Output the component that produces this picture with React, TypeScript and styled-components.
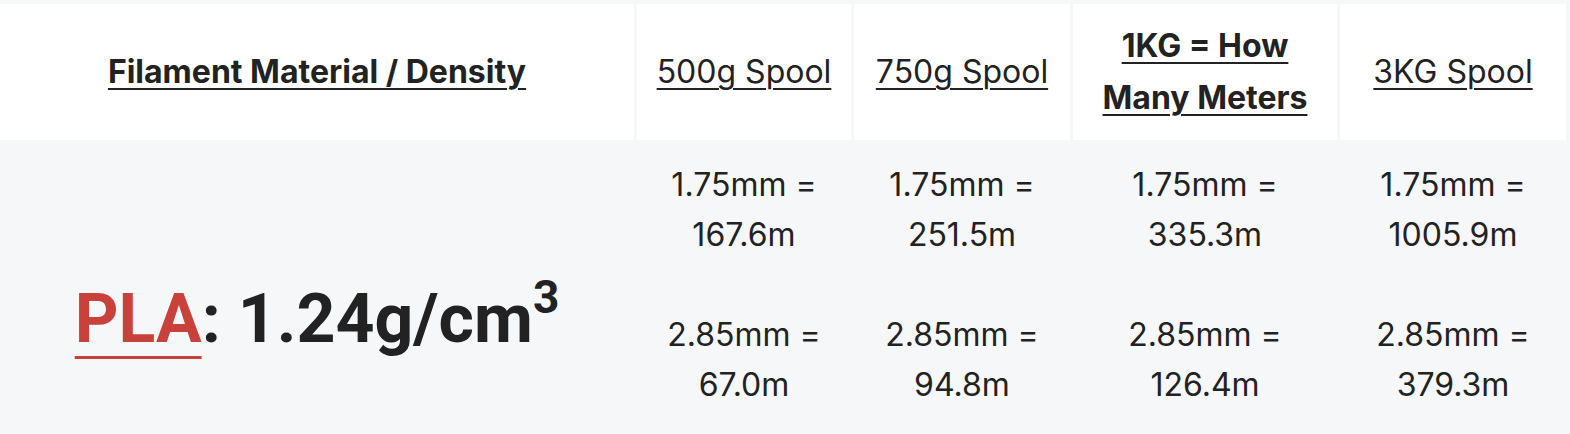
import * as React from "react";
import styled, { createGlobalStyle } from "styled-components";

const GlobalStyle = createGlobalStyle`
  html, body {
    margin: 0;
    padding: 0;
    background: #f6f7f9;
  }
  body {
    font-family: Inter, "Noto Sans", sans-serif;
    color: #222;
    -webkit-font-smoothing: antialiased;
  }
`;

type Spool = {
  title: string;
  bold?: boolean;
  lines: string[];
  values: [string, string][];
};

const spools: Spool[] = [
  { title: "500g Spool", lines: ["500g Spool"], values: [["1.75mm =", "167.6m"], ["2.85mm =", "67.0m"]] },
  { title: "750g Spool", lines: ["750g Spool"], values: [["1.75mm =", "251.5m"], ["2.85mm =", "94.8m"]] },
  {
    title: "1KG = How Many Meters",
    bold: true,
    lines: ["1KG = How", "Many Meters"],
    values: [["1.75mm =", "335.3m"], ["2.85mm =", "126.4m"]],
  },
  { title: "3KG Spool", lines: ["3KG Spool"], values: [["1.75mm =", "1005.9m"], ["2.85mm =", "379.3m"]] },
];

export default function App() {
  return (
    <React.Fragment>
      <GlobalStyle />
      <Table>
        <HeadCell>
          <HeadText $bold>Filament Material / Density</HeadText>
        </HeadCell>
        {spools.map((s) => (
          <HeadCell key={s.title}>
            <HeadText $bold={s.bold}>
              {s.lines.map((l, i) => (
                <React.Fragment key={l}>
                  {i > 0 && <br />}
                  {l}
                </React.Fragment>
              ))}
            </HeadText>
          </HeadCell>
        ))}

        <DensityCell>
          <Density>
            <Material>PLA</Material>: 1.24g/cm<Sup>3</Sup>
          </Density>
        </DensityCell>
        {spools.map((s) => (
          <BodyCell key={s.title}>
            {s.values.map(([a, b]) => (
              <Group key={a}>
                <span>{a}</span>
                <span>{b}</span>
              </Group>
            ))}
          </BodyCell>
        ))}
      </Table>
    </React.Fragment>
  );
}

const Table = styled.div`
  display: grid;
  grid-template-columns: 634px 214px 216px 264px 226px;
  column-gap: 3px;
  width: 1566px;
  padding-top: 4px;
  background: #f6f7f9;
`;

const HeadCell = styled.div`
  height: 136px;
  background: #fff;
  display: flex;
  align-items: center;
  justify-content: center;
  text-align: center;
  font-size: 32px;
  line-height: 52px;
`;

const HeadText = styled.span<{ $bold?: boolean }>`
  font-weight: ${(p) => (p.$bold ? 700 : 400)};
  color: #222;
  text-decoration: underline;
  text-decoration-thickness: 2px;
  text-underline-offset: 5px;
`;

const DensityCell = styled.div`
  display: flex;
  align-items: center;
  justify-content: center;
  padding-top: 64px;
`;

const Density = styled.div`
  font-family: Roboto, "Liberation Sans", sans-serif;
  font-weight: 700;
  font-size: 68px;
  line-height: 80px;
  color: #222;
`;

const Material = styled.span`
  color: #c8423b;
  text-decoration: underline;
  text-decoration-color: #c8423b;
  text-decoration-thickness: 3px;
  text-underline-offset: 14px;
`;

const Sup = styled.sup`
  font-size: 46px;
  line-height: 0;
  vertical-align: 29px;
`;

const BodyCell = styled.div`
  padding: 20px 0 24px;
  display: flex;
  flex-direction: column;
  align-items: center;
  gap: 50px;
  font-size: 32px;
  line-height: 50px;
  text-align: center;
  color: #222;
`;

const Group = styled.div`
  display: flex;
  flex-direction: column;
  align-items: center;
`;
